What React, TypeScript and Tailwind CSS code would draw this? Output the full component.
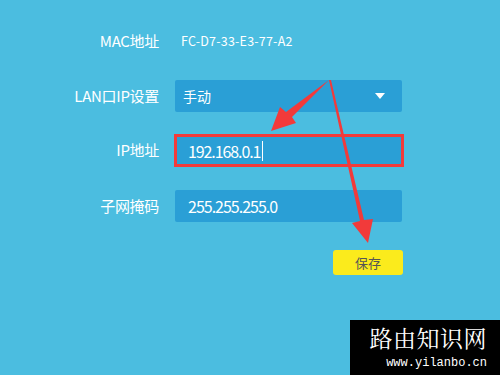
import React from 'react';

const font = { fontFamily: '"Noto Sans CJK SC", "Open Sans", sans-serif' };

function Row({ label, children }: { label: string; children: React.ReactNode }) {
  return (
    <div className="flex items-center">
      <div className="w-[160px] text-right text-[15px] text-white tracking-[-0.3px] pr-[1px]">{label}</div>
      <div className="ml-[15px]">{children}</div>
    </div>
  );
}

export default function App() {
  return (
    <div className="relative w-[500px] h-[375px] bg-[#4bbde0] overflow-hidden" style={font}>
      <div className="flex flex-col pt-[28px]">
        <Row label="MAC地址">
          <div className="h-[26px] flex items-center pl-[6px] text-[12.5px] tracking-[0.2px] text-white">FC-D7-33-E3-77-A2</div>
        </Row>

        <div className="mt-[26px]">
          <Row label="LAN口IP设置">
            <div className="w-[227px] h-[32px] rounded-[2px] bg-[#2a9fd6] flex items-center justify-between pl-[8px] pr-[17px] text-white text-[14px]">
              <span>手动</span>
              <svg width="10" height="6" viewBox="0 0 10 6"><path d="M0 0h10L5 6z" fill="#fff" /></svg>
            </div>
          </Row>
        </div>

        <div className="mt-[22px]">
          <Row label="IP地址">
            <div className="-ml-[1px] w-[230px] h-[33px] border-[3px] border-[#f33a3a] bg-[#2a9fd6] flex items-center pl-[11px] text-white text-[16px] tracking-[-1.1px]">
              <span>192.168.0.1</span>
              <span className="w-[1px] h-[20px] bg-white ml-[2px]" />
            </div>
          </Row>
        </div>

        <div className="mt-[23px]">
          <Row label="子网掩码">
            <div className="w-[227px] h-[32px] rounded-[2px] bg-[#2a9fd6] flex items-center pl-[13px] text-white text-[16px] tracking-[-1px]">
              255.255.255.0
            </div>
          </Row>
        </div>

        <div className="mt-[28px] flex justify-end pr-[97px]">
          <button className="w-[70px] h-[25px] rounded-[3px] bg-[#fbeb1c] text-[13px] text-[#555]">保存</button>
        </div>
      </div>

      {/* annotation arrows */}
      <svg className="absolute inset-0" width="500" height="375" viewBox="0 0 500 375">
        <path d="M329 80 L292 117 L296 123 L271 131 L280 107 L286 112 Z" fill="#f23a3a" />
        <path d="M329 80 L331 80 L364 220 L373 219 L368 243 L352 223 L360 221 Z" fill="#f23a3a" />
      </svg>

      {/* watermark */}
      <div className="absolute right-0 bottom-0 w-[150px] h-[55px] bg-black flex flex-col items-end pr-[13px] pt-[6px]">
        <div className="text-[23px] leading-[23px] text-white tracking-[0.5px]" style={{ fontFamily: '"Noto Serif CJK SC", "Noto Sans CJK SC", serif' }}>路由知识网</div>
        <div className="text-[12px] leading-[12px] text-white mt-[8px]" style={{ fontFamily: '"Liberation Mono", monospace' }}>www.yilanbo.cn</div>
      </div>
    </div>
  );
}
